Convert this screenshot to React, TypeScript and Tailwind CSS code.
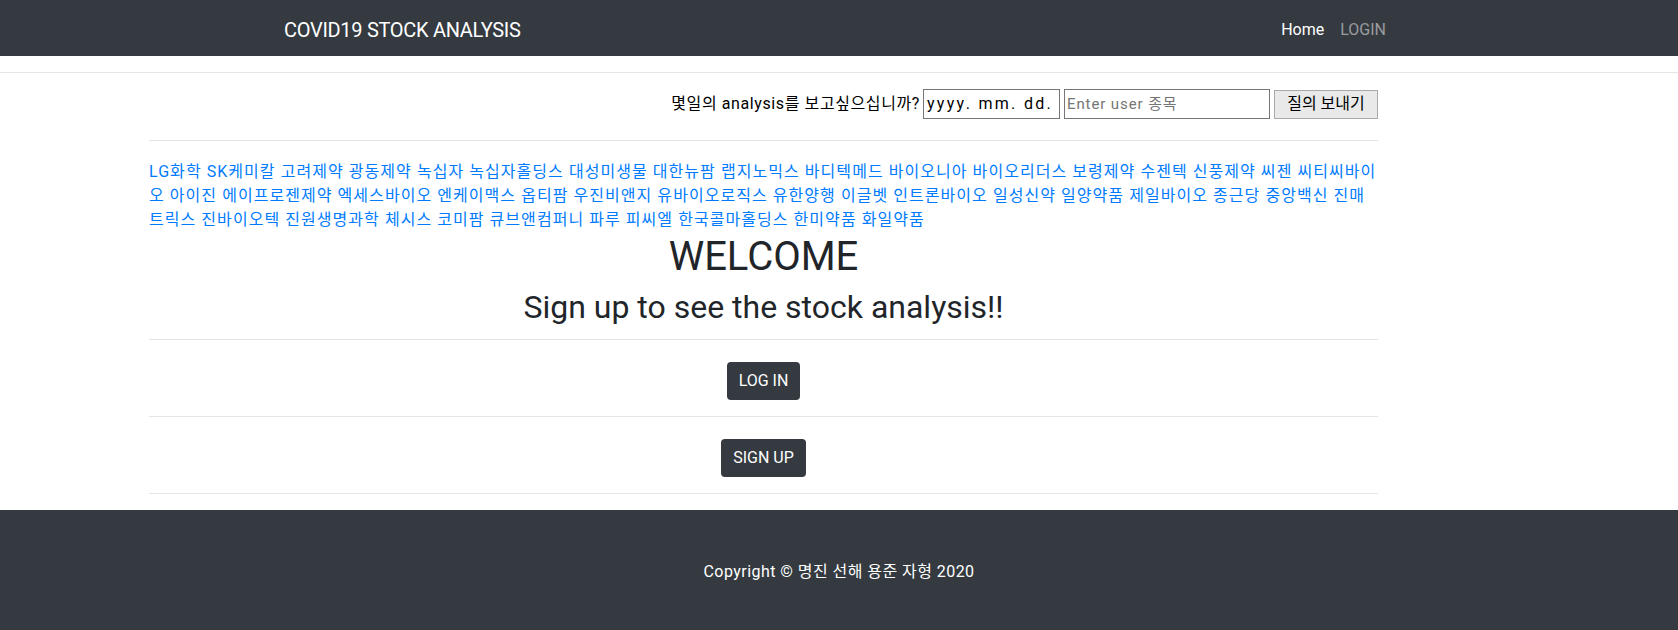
import React from "react";

const stocks = [
  "LG화학", "SK케미칼", "고려제약", "광동제약", "녹십자", "녹십자홀딩스", "대성미생물", "대한뉴팜", "랩지노믹스", "바디텍메드",
  "바이오니아", "바이오리더스", "보령제약", "수젠텍", "신풍제약", "씨젠", "씨티씨바이|오", "아이진", "에이프로젠제약", "엑세스바이오",
  "엔케이맥스", "옵티팜", "우진비앤지", "유바이오로직스", "유한양행", "이글벳", "인트론바이오", "일성신약", "일양약품", "제일바이오",
  "종근당", "중앙백신", "진매|트릭스", "진바이오텍", "진원생명과학", "체시스", "코미팜", "큐브앤컴퍼니", "파루", "피씨엘",
  "한국콜마홀딩스", "한미약품", "화일약품",
];

function StockLink({ name }: { name: string }) {
  const parts = name.split("|");
  return (
    <a className="text-[#007bff]">
      {parts.map((p, i) => (
        <React.Fragment key={i}>
          {i > 0 && <br />}
          {p}
        </React.Fragment>
      ))}
    </a>
  );
}

export default function App() {
  return (
    <div className="min-h-[630px] bg-white text-[16px] leading-[24px] text-[#212529] font-['Roboto','Noto_Sans_CJK_KR',sans-serif]">
      <nav className="h-[56px] bg-[#343a40]">
        <div className="mx-auto flex h-full w-[1110px] items-center justify-between pt-[3px]">
          <span className="text-[20px] leading-[30px] tracking-[-0.3px] text-white">COVID19 STOCK ANALYSIS</span>
          <div className="flex">
            <span className="px-2 text-white">Home</span>
            <span className="px-2 text-[rgba(255,255,255,0.5)]">LOGIN</span>
          </div>
        </div>
      </nav>
      <div className="mt-[16px] border-t border-[rgba(0,0,0,0.1)]" />
      <main className="ml-[149px] w-[1229px]">
        <div className="mt-[16px] flex h-[30px] items-center justify-end gap-[4px]">
          <span className="mr-[-1px] tracking-[0.6px] text-black">몇일의 analysis를 보고싶으십니까?</span>
          <div className="flex h-[30px] w-[137px] items-center overflow-hidden whitespace-nowrap border border-[#767676] px-[3px] text-[16px] tracking-[2.3px] text-black">
            yyyy. mm. dd.
          </div>
          <div className="flex h-[30px] w-[206px] items-center border border-[#767676] px-[2px] text-[15px] tracking-[0.9px] text-[#757575]">
            Enter user 종목
          </div>
          <button className="h-[29px] w-[104px] border border-[#a9a9a9] bg-[#e9e9e9] text-[16px] text-black">
            질의 보내기
          </button>
        </div>
        <div className="mt-[21px] border-t border-[rgba(0,0,0,0.1)]" />
        <div className="mt-[19px] tracking-[1.05px]">
          {stocks.map((s, i) => (
            <React.Fragment key={s}>
              <StockLink name={s} />
              {i < stocks.length - 1 ? " " : ""}
            </React.Fragment>
          ))}
        </div>
        <h1 className="mt-[1px] text-center text-[40px] leading-[48px] font-normal">WELCOME</h1>
        <h2 className="mt-[7px] text-center text-[32px] leading-[38px] font-normal">Sign up to see the stock analysis!!</h2>
        <div className="mt-[13px] border-t border-[rgba(0,0,0,0.1)]" />
        <div className="flex justify-center pt-[22px] pb-[16px]">
          <button className="h-[38px] rounded-[4px] bg-[#343a40] px-[12px] text-white">LOG IN</button>
        </div>
        <div className="border-t border-[rgba(0,0,0,0.1)]" />
        <div className="flex justify-center pt-[22px] pb-[16px]">
          <button className="h-[38px] rounded-[4px] bg-[#343a40] px-[12px] text-white">SIGN UP</button>
        </div>
        <div className="border-t border-[rgba(0,0,0,0.1)]" />
      </main>
      <footer className="mt-[16px] flex h-[120px] items-center justify-center bg-[#343a40] pt-[4px] tracking-[0.45px] text-white">
        Copyright © 명진 선해 용준 자형 2020
      </footer>
    </div>
  );
}
